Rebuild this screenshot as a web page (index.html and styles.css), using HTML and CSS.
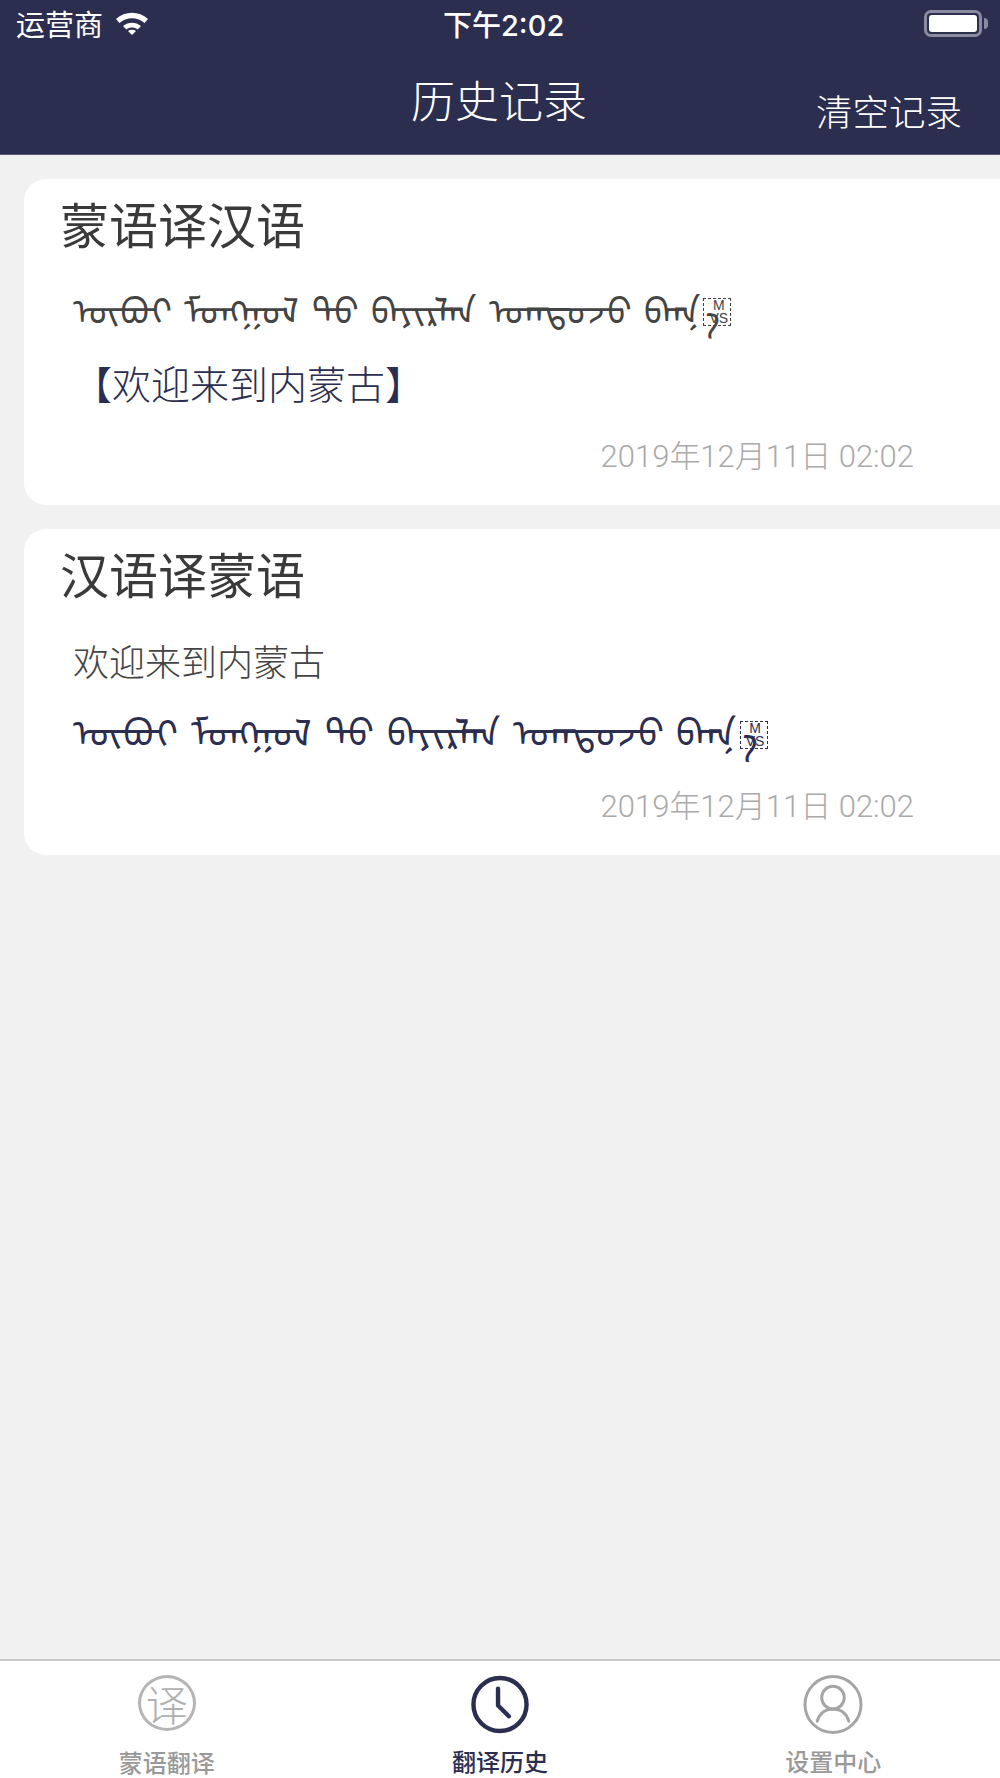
FILE: index.html
```html
<!DOCTYPE html>
<html lang="zh-CN">
<head>
    <meta charset="UTF-8">
    <title>历史记录</title>
    <link rel="stylesheet" href="styles.css">
</head>
<body>
    <header class="topbar">
        <div class="status">
            <div class="status-left">
                <span>运营商</span>
                <svg class="wifi" viewBox="0 0 34 23">
                    <path d="M1 7.5C10 -0.8 24 -0.8 33 7.5L29.5 11.5C22.5 5 11.5 5 4.5 11.5Z" fill="#fff"/>
                    <path d="M8 14.5C13 10 21 10 26 14.5L22.6 18C19.5 15.4 14.5 15.4 11.4 18Z" fill="#fff"/>
                    <path d="M13 19.5C15.3 17.8 18.7 17.8 21 19.5L17 23.5Z" fill="#fff"/>
                </svg>
            </div>
            <div class="status-time">下午2:02</div>
            <div class="battery"><div class="battery-fill"></div></div>
        </div>
        <div class="navbar">
            <h1>历史记录</h1>
            <a class="clear">清空记录</a>
        </div>
    </header>

    <main class="list">
        <section class="card">
            <h2>蒙语译汉语</h2>
            <p class="source mongol">ᠥᠪᠥᠶ ᠮᠣᠩᠭᠣᠯ ᠳᠤ&#x180C; ᠪᠠᠶᠢᠷᠯᠠᠨ ᠤᠭᠲᠤᠵᠤ&#x180C; ᠪᠠᠠᠨ&#x180B;<span class="mvs"><span class="mvs-label">M<br>VS</span><span class="mvs-tail">ᠠ&#x180C;</span></span></p>
            <p class="result">【欢迎来到内蒙古】</p>
            <div class="date">2019年12月11日 02:02</div>
        </section>
        <section class="card">
            <h2>汉语译蒙语</h2>
            <p class="source plain">欢迎来到内蒙古</p>
            <p class="result mongol">ᠥᠪᠥᠶ ᠮᠣᠩᠭᠣᠯ ᠲᠤ&#x180C; ᠪᠠᠶᠢᠷᠯᠠᠨ ᠤᠭᠲᠤᠵᠤ&#x180C; ᠪᠠᠠᠨ&#x180B;<span class="mvs"><span class="mvs-label">M<br>VS</span><span class="mvs-tail">ᠠ&#x180C;</span></span></p>
            <div class="date">2019年12月11日 02:02</div>
        </section>
    </main>

    <nav class="tabbar">
        <div class="tab">
            <div class="yi-icon">译</div>
            <span>蒙语翻译</span>
        </div>
        <div class="tab active">
            <svg class="tab-icon" viewBox="0 0 60 60">
                <circle cx="30" cy="30" r="27" fill="none" stroke="#2c2e50" stroke-width="4.5"/>
                <path d="M28 14V31L39 42" fill="none" stroke="#2c2e50" stroke-width="4.5" stroke-linecap="round" stroke-linejoin="round"/>
            </svg>
            <span>翻译历史</span>
        </div>
        <div class="tab">
            <svg class="tab-icon" viewBox="0 0 60 60">
                <circle cx="30" cy="30" r="28.5" fill="none" stroke="#a5a5a5" stroke-width="3"/>
                <circle cx="30" cy="23" r="11.5" fill="none" stroke="#a5a5a5" stroke-width="3"/>
                <path d="M14 47C16 39 22 34.5 30 34.5C38 34.5 44 39 46 47" fill="none" stroke="#a5a5a5" stroke-width="3" stroke-linecap="round"/>
            </svg>
            <span>设置中心</span>
        </div>
    </nav>
</body>
</html>
```

FILE: styles.css
```css
* {
    box-sizing: border-box;
}

html, body {
    height: 100%;
}

body {
    margin: 0;
    font-family: "Noto Sans CJK SC", "Noto Sans", sans-serif;
    background-color: #f1f1f1;
    display: flex;
    flex-direction: column;
    overflow: hidden;
}

.topbar {
    height: 155px;
    background-color: #2c2e50;
    border-bottom: 1px solid #55566f;
    color: white;
}

.status {
    display: flex;
    justify-content: space-between;
    align-items: center;
    height: 46px;
    padding: 0 18px 0 16px;
    position: relative;
    font-size: 29px;
}

.status-left {
    display: flex;
    align-items: center;
    gap: 12px;
}

.wifi {
    width: 34px;
    height: 24px;
}

.status-time {
    position: absolute;
    left: 443px;
    font-family: "Inter", "Noto Sans CJK SC", sans-serif;
    font-size: 29px;
    font-weight: 500;
}

.battery {
    width: 58px;
    height: 27px;
    border: 3px solid #8a8b9e;
    border-radius: 7px;
    padding: 2px;
    position: relative;
}

.battery::after {
    content: "";
    position: absolute;
    right: -9px;
    top: 5px;
    width: 4px;
    height: 11px;
    background-color: #8a8b9e;
    border-radius: 0 4px 4px 0;
}

.battery-fill {
    height: 100%;
    background-color: white;
    border-radius: 3px;
}

.navbar {
    position: relative;
    text-align: center;
}

.navbar h1 {
    margin: 0;
    padding-top: 22px;
    padding-right: 2px;
    font-size: 44px;
    font-weight: 300;
    line-height: 62px;
}

.clear {
    position: absolute;
    right: 38px;
    top: 38px;
    font-size: 36.5px;
    line-height: 54px;
    font-weight: 300;
}

.list {
    flex: 1;
    padding: 24px 0 0 24px;
}

.card {
    display: flex;
    flex-direction: column;
    height: 326px;
    margin-right: -40px;
    margin-bottom: 24px;
    padding: 11px 0 0 36px;
    background-color: white;
    border-radius: 22px;
}

.card h2 {
    margin: 0;
    font-size: 49px;
    font-weight: 400;
    line-height: 66px;
    color: #3a3a3a;
}

.source, .result {
    margin: 0;
    padding-left: 13px;
    font-size: 36px;
    font-weight: 300;
    line-height: 74px;
}

.source {
    color: #444;
    margin-top: 15px;
}

.plain {
    padding-top: 2px;
}

.result {
    font-size: 39px;
    color: #2c2e50;
}

.result.mongol {
    font-size: 38px;
    margin-top: -3px;
}

.mongol {
    word-spacing: 4.5px;
}

.mvs {
    display: inline-block;
    position: relative;
    top: -2px;
    width: 28px;
    height: 28px;
    margin-left: 3px;
    border: 1px dashed currentColor;
    vertical-align: middle;
}

.mvs-label {
    display: block;
    padding-left: 3px;
    font-family: "Liberation Sans", sans-serif;
    font-size: 14px;
    line-height: 13px;
    text-align: center;
}

.mvs-tail {
    position: absolute;
    left: 1px;
    top: -23px;
    line-height: 74px;
}

.date {
    margin-top: auto;
    margin-right: 126px;
    margin-bottom: 25px;
    text-align: right;
    font-family: "Roboto", "Noto Sans CJK SC", sans-serif;
    font-size: 31px;
    font-weight: 300;
    line-height: 46px;
    color: #aaa;
}

.tabbar {
    display: flex;
    height: 119px;
    background-color: white;
    border-top: 2px solid #c9c9c9;
}

.tab {
    flex: 1;
    display: flex;
    flex-direction: column;
    align-items: center;
    padding-top: 14px;
    font-size: 24px;
    font-weight: 500;
    color: #999;
}

.tab span {
    line-height: 34px;
    margin-top: 12px;
}

.tab.active {
    color: #2c2e50;
}

.tab-icon {
    width: 62px;
    height: 62px;
    margin-bottom: -2px;
}

.yi-icon {
    width: 58px;
    height: 58px;
    margin-bottom: 2px;
    border: 3px solid #b5b5b5;
    border-radius: 50%;
    text-align: center;
    font-size: 42px;
    font-weight: 300;
    line-height: 50px;
    color: #b0b0b0;
}
```
